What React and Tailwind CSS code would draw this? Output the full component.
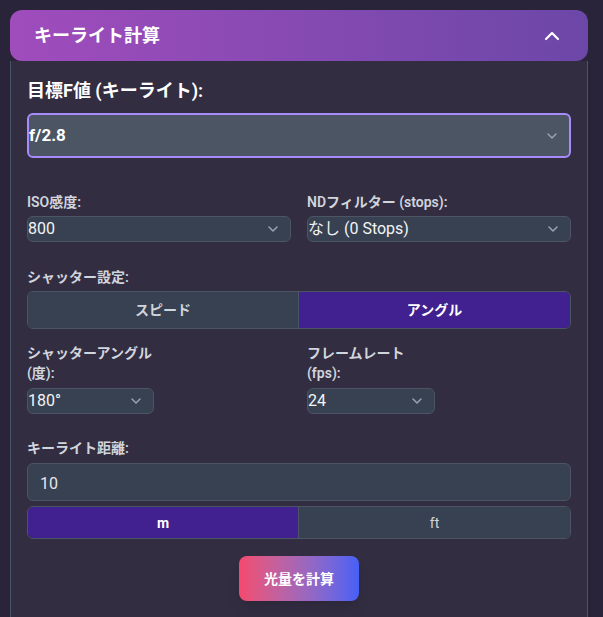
import React from "react";

function ChevronDown({ className = "" }) {
  return (
    <svg width="10" height="6" viewBox="0 0 10 6" className={className} fill="none">
      <polyline points="1,1 5,5 9,1" stroke="#9ca3af" strokeWidth="1.5" strokeLinecap="round" strokeLinejoin="round" />
    </svg>
  );
}

function ChevronUp() {
  return (
    <svg width="24" height="24" viewBox="0 0 24 24" fill="none" stroke="white" strokeWidth="2.2" strokeLinecap="round" strokeLinejoin="round">
      <path d="m18 15-6-6-6 6" />
    </svg>
  );
}

function Select({ value, className = "" }) {
  return (
    <div className={`h-[26px] flex items-center justify-between bg-[#374151] border border-[#4b5563] rounded-md pr-3 ${className}`}>
      <span className="text-base leading-6 text-gray-100">{value}</span>
      <ChevronDown />
    </div>
  );
}

function Label({ children, className = "" }) {
  return <div className={`text-sm leading-5 font-semibold text-gray-300 ${className}`}>{children}</div>;
}

export default function App() {
  return (
    <div
      className="min-h-screen bg-[#29243a] pl-[10px] pr-[15px] pt-[10px]"
      style={{ fontFamily: 'Roboto, "Noto Sans CJK JP", "Noto Sans", sans-serif' }}
    >
      <div className="h-[51px] rounded-xl flex items-center justify-between px-6 bg-linear-to-r from-[#a04cbc] to-[#6c47a8]">
        <span className="text-lg leading-7 font-bold text-white">キーライト計算</span>
        <ChevronUp />
      </div>
      <div className="bg-[#332d42] border-x border-[#4b5563] px-4 pt-4 pb-10">
        <div className="text-lg leading-7 font-bold text-white mb-2">目標F値 (キーライト):</div>
        <div className="h-[45px] flex items-center justify-between border-2 border-[#a78bfa] bg-[#4b5563] rounded-md pr-3">
          <span className="text-[17px] font-bold text-white">f/2.8</span>
          <ChevronDown />
        </div>

        <div className="grid grid-cols-2 gap-x-4 mt-[34px]">
          <div>
            <Label className="mb-1">ISO感度:</Label>
            <Select value="800" />
          </div>
          <div>
            <Label className="mb-1">NDフィルター (stops):</Label>
            <Select value="なし (0 Stops)" />
          </div>
        </div>

        <Label className="mt-[25px] mb-1">シャッター設定:</Label>
        <div className="h-[38px] grid grid-cols-2 border border-[#4b5563] rounded-md overflow-hidden">
          <div className="flex items-center justify-center bg-[#374151] border-r border-[#4b5563] text-sm font-bold text-gray-300">
            スピード
          </div>
          <div className="flex items-center justify-center bg-[#41208f] text-sm font-bold text-white">
            アングル
          </div>
        </div>

        <div className="grid grid-cols-2 gap-x-4 mt-[14px]">
          <div>
            <Label className="mb-[5px]">
              シャッターアングル
              <br />
              (度):
            </Label>
            <Select value="180°" className="w-[127px]" />
          </div>
          <div>
            <Label className="mb-[5px]">
              フレームレート
              <br />
              (fps):
            </Label>
            <Select value="24" className="w-[128px]" />
          </div>
        </div>

        <Label className="mt-[24px] mb-[5px]">キーライト距離:</Label>
        <div className="h-[38px] flex items-center px-3 pt-[3px] bg-[#374151] border border-[#4b5563] rounded-md text-base text-gray-200">
          10
        </div>
        <div className="mt-[5px] h-[33px] grid grid-cols-2 border border-[#4b5563] rounded-md overflow-hidden">
          <div className="flex items-center justify-center bg-[#41208f] border-r border-[#4b5563] text-sm font-bold text-white">
            m
          </div>
          <div className="flex items-center justify-center bg-[#374151] text-sm text-gray-300">ft</div>
        </div>

        <div className="mt-[17px] flex justify-center">
          <button className="w-[120px] h-[45px] rounded-lg bg-linear-to-r from-[#f5486d] to-[#465ff6] text-sm font-bold text-white shadow-lg">
            光量を計算
          </button>
        </div>
      </div>
    </div>
  );
}
